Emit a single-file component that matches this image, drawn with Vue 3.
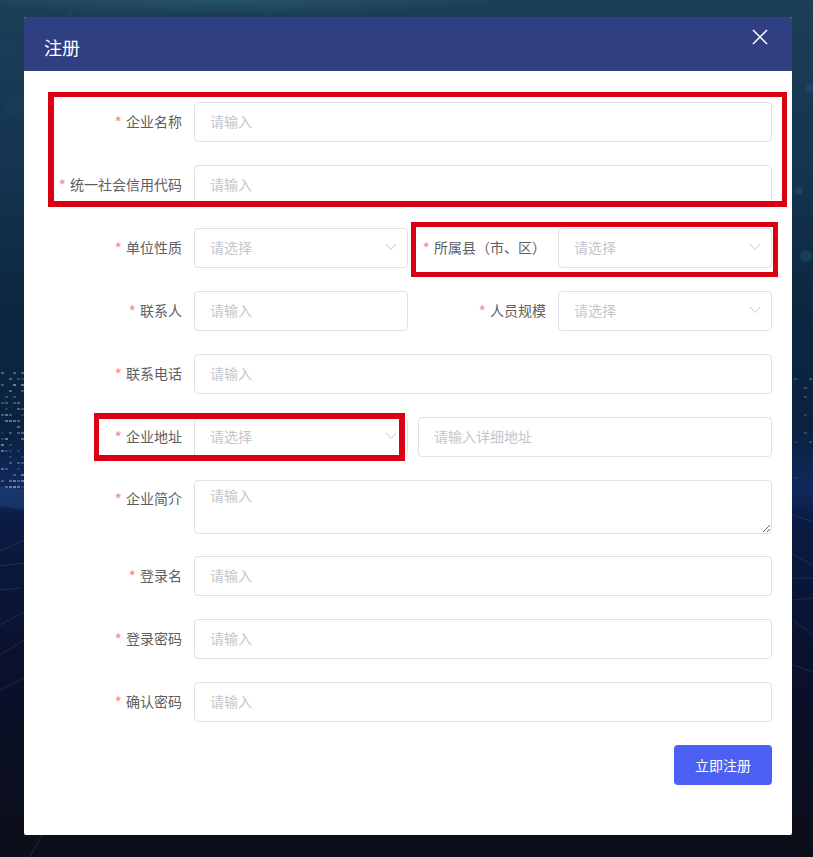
<script setup>
const required = (label, kind = 'input', placeholder = '请输入') => ({ label, kind, placeholder })

const rowsTop = [required('企业名称'), required('统一社会信用代码')]
const pairs = [
  [required('单位性质', 'select', '请选择'), required('所属县（市、区）', 'select', '请选择')],
  [required('联系人'), required('人员规模', 'select', '请选择')],
]
const rowsBottom = [required('登录名'), required('登录密码'), required('确认密码')]

// Deterministic sprinkle of lit "windows" for the backdrop city
let seed = 7
const rnd = () => {
  seed = (seed * 9301 + 49297) % 233280
  return seed / 233280
}
const dots = []
for (let y = 372; y < 490; y += 6) {
  for (let x = 1; x < 24; x += 4) {
    if (rnd() > 0.42) dots.push({ x, y, o: (0.12 + rnd() * 0.4).toFixed(2) })
  }
}
for (let y = 378; y < 480; y += 9) {
  for (let x = 794; x < 813; x += 5) {
    if (rnd() > 0.75) dots.push({ x, y, o: (0.08 + rnd() * 0.22).toFixed(2) })
  }
}
const streaks = [
  'M0 551 L24 540', 'M0 566 L24 563', 'M0 590 L22 588', 'M0 625 L24 612', 'M0 655 L24 640',
  'M0 690 L24 678', 'M793 515 L813 522', 'M793 555 L813 565', 'M793 578 L813 578',
  'M793 620 L813 635', 'M793 665 L813 672', 'M793 600 L813 598', 'M30 857 L42 835',
]
const bokeh = [
  { x: 799, y: 191, r: 4, o: 0.3 }, { x: 806, y: 256, r: 6, o: 0.3 }, { x: 811, y: 88, r: 5, o: 0.25 },
  { x: 70, y: 14, r: 3, o: 0.1 }, { x: 270, y: 13, r: 2, o: 0.15 }, { x: 8, y: 50, r: 9, o: 0.06 },
  { x: 14, y: 105, r: 11, o: 0.06 }, { x: 6, y: 160, r: 10, o: 0.06 },
]
</script>

<template>
  <div class="page">
    <svg class="backdrop" viewBox="0 0 813 857" width="813" height="857" aria-hidden="true">
      <defs>
        <linearGradient id="sky" x1="0" y1="0" x2="0" y2="1">
          <stop offset="0" stop-color="#1c3f58" />
          <stop offset="0.2" stop-color="#14344f" />
          <stop offset="0.36" stop-color="#0c2740" />
          <stop offset="0.5" stop-color="#0a2140" />
          <stop offset="0.57" stop-color="#10295c" />
          <stop offset="0.61" stop-color="#0b1b42" />
          <stop offset="0.75" stop-color="#0a1230" />
          <stop offset="0.88" stop-color="#0a0f22" />
          <stop offset="1" stop-color="#0d0e1a" />
        </linearGradient>
        <radialGradient id="teal" cx="0.28" cy="0" r="0.35">
          <stop offset="0" stop-color="#2a5a66" stop-opacity="0.8" />
          <stop offset="1" stop-color="#2a5a66" stop-opacity="0" />
        </radialGradient>
      </defs>
      <rect width="813" height="857" fill="url(#sky)" />
      <rect x="0" y="0" width="813" height="40" fill="url(#teal)" />
      <circle v-for="(b, i) in bokeh" :key="'b' + i" :cx="b.x" :cy="b.y" :r="b.r" fill="#2e6a8e" :opacity="b.o" />
      <rect v-for="(d, i) in dots" :key="'d' + i" :x="d.x" :y="d.y" width="3" height="2" fill="#c9d6e0" :opacity="d.o" />
      <path d="M0 486 L24 490 L24 510 L0 506Z" fill="#2f5a9c" opacity="0.3" />
      <path v-for="(s, i) in streaks" :key="'s' + i" :d="s" stroke="#7f93b5" stroke-width="1" opacity="0.18" fill="none" />
    </svg>

    <section class="dialog">
      <header class="dialog-head">
        <h2 class="dialog-title">注册</h2>
        <svg class="close" viewBox="0 0 16 16" width="16" height="16" aria-label="关闭">
          <path d="M1 1 L15 15 M15 1 L1 15" stroke="#fff" stroke-width="1.5" fill="none" />
        </svg>
      </header>

      <form class="form" @submit.prevent>
        <div v-for="r in rowsTop" :key="r.label" class="row">
          <label class="label">{{ r.label }}</label>
          <input class="control" :placeholder="r.placeholder" />
        </div>

        <div v-for="(pair, i) in pairs" :key="i" class="row pair">
          <template v-for="f in pair" :key="f.label">
            <label class="label">{{ f.label }}</label>
            <div v-if="f.kind === 'select'" class="select">
              <input class="control" readonly :placeholder="f.placeholder" />
              <svg class="chevron" viewBox="0 0 12 8" width="12" height="8">
                <path d="M1 1 L6 6.5 L11 1" stroke="#c6c9d0" stroke-width="1" fill="none" />
              </svg>
            </div>
            <input v-else class="control" :placeholder="f.placeholder" />
          </template>
        </div>

        <div class="row">
          <label class="label">联系电话</label>
          <input class="control" placeholder="请输入" />
        </div>

        <div class="row">
          <label class="label">企业地址</label>
          <div class="address">
            <div class="select">
              <input class="control" readonly placeholder="请选择" />
              <svg class="chevron" viewBox="0 0 12 8" width="12" height="8">
                <path d="M1 1 L6 6.5 L11 1" stroke="#c6c9d0" stroke-width="1" fill="none" />
              </svg>
            </div>
            <input class="control" placeholder="请输入详细地址" />
          </div>
        </div>

        <div class="row row-area">
          <label class="label label-area">企业简介</label>
          <textarea class="control area" placeholder="请输入"></textarea>
        </div>

        <div v-for="r in rowsBottom" :key="r.label" class="row">
          <label class="label">{{ r.label }}</label>
          <input class="control" :placeholder="r.placeholder" />
        </div>

        <div class="actions">
          <button class="submit" type="button">立即注册</button>
        </div>
      </form>
    </section>

    <div class="mark mark-a"></div>
    <div class="mark mark-b"></div>
    <div class="mark mark-c"></div>
  </div>
</template>

<style scoped>
.page {
  position: relative;
  box-sizing: border-box;
  width: 813px;
  height: 857px;
  overflow: hidden;
  padding: 17px 21px 22px 24px;
  font-family: "Noto Sans CJK SC", "Noto Sans", sans-serif;
  font-size: 14px;
}
.backdrop {
  position: absolute;
  left: 0;
  top: 0;
}
.dialog {
  position: relative;
  background: #fff;
  border-radius: 2px;
  height: 818px;
}
.dialog-head {
  display: flex;
  justify-content: space-between;
  align-items: flex-start;
  height: 54px;
  background: #303f82;
  border-radius: 2px 2px 0 0;
  padding: 0 24px 0 20px;
}
.dialog-title {
  margin: 0;
  font-size: 18px;
  font-weight: 400;
  line-height: 61px;
  color: #fff;
}
.close {
  margin-top: 12px;
}
.form {
  padding: 31px 20px 0;
  display: flex;
  flex-direction: column;
  gap: 23px;
}
.row {
  display: grid;
  grid-template-columns: 150px 1fr;
  height: 40px;
}
.row.pair {
  grid-template-columns: 150px 214px 150px 214px;
}
.row-area {
  height: 54px;
  margin-bottom: -1px;
}
.label {
  box-sizing: border-box;
  padding-right: 12px;
  line-height: 38px;
  text-align: right;
  color: #5c5e63;
  white-space: nowrap;
}
.label-area {
  line-height: 36px;
}
.label::before {
  content: "*";
  display: inline-block;
  font-size: 16px;
  line-height: 0;
  vertical-align: -2px;
  color: #f78989;
  margin-right: 4px;
}
.control {
  box-sizing: border-box;
  display: block;
  width: 100%;
  height: 40px;
  border: 1px solid #dfe0e8;
  border-radius: 4px;
  padding: 0 15px 2px;
  background: #fff;
  color: #606266;
  font: inherit;
  outline: none;
}
.control::placeholder {
  color: #c4c6ce;
  opacity: 1;
}
.area {
  height: 54px;
  padding: 4px 15px;
  line-height: 21px;
  resize: vertical;
}
.select {
  position: relative;
}
.chevron {
  position: absolute;
  right: 11px;
  top: 15px;
}
.address {
  display: grid;
  grid-template-columns: 214px 1fr;
  gap: 10px;
}
.actions {
  display: flex;
  justify-content: flex-end;
}
.submit {
  width: 98px;
  height: 40px;
  border: 0;
  border-radius: 4px;
  background: #4c60f3;
  color: #fff;
  font: inherit;
  padding: 0 0 1px;
}
.mark {
  position: absolute;
  box-sizing: border-box;
  border: 5px solid #dc0014;
}
.mark-a {
  left: 48px;
  top: 92px;
  width: 739px;
  height: 115px;
  border-width: 5px 5px 6px 6px;
}
.mark-b {
  left: 411px;
  top: 222px;
  width: 367px;
  height: 55px;
}
.mark-c {
  left: 94px;
  top: 413px;
  width: 311px;
  height: 48px;
  border-width: 6px 6px 6px 5px;
}
</style>

<style>
html, body { margin: 0; background: #0d0e1a; overflow: hidden; }
</style>
